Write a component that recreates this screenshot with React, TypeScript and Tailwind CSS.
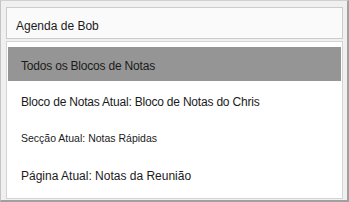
import React from "react";

export default function App() {
  const font = { fontFamily: '"Liberation Sans", Arial, sans-serif' };
  return (
    <div
      className="w-[349px] h-[202px] bg-[#f0f0f0] border-t border-l border-t-[#d0d0d0] border-l-[#c4c4c4] border-r-2 border-b-2 border-r-[#a0a0a0] border-b-[#a0a0a0] pt-[6px] pl-[5px] pr-[3px] text-[#1b1b1b]"
      style={font}
    >
      <div className="w-[337px] h-[32px] bg-[#fafafa] border border-[#cccccc] flex items-center pl-[9px] pt-[6px] text-[12px]">
        Agenda de Bob
      </div>
      <div className="mt-[2px] w-[337px] h-[158px] bg-white border border-[#d4d4d4] px-px pt-[5px] flex flex-col gap-[4px]">
        <div className="h-[34px] bg-[#959595] flex items-center pl-[13px] pt-[4px] text-[12px] tracking-[-0.2px]">
          Todos os Blocos de Notas
        </div>
        <div className="h-[34px] flex items-center pl-[13px] text-[12px] tracking-[-0.2px]">
          Bloco de Notas Atual: Bloco de Notas do Chris
        </div>
        <div className="h-[34px] flex items-center pl-[13px] pb-[3px] text-[10.5px]">
          Secção Atual: Notas Rápidas
        </div>
        <div className="h-[34px] flex items-center pl-[13px] pb-[4px] text-[12px]">
          Página Atual: Notas da Reunião
        </div>
      </div>
    </div>
  );
}
